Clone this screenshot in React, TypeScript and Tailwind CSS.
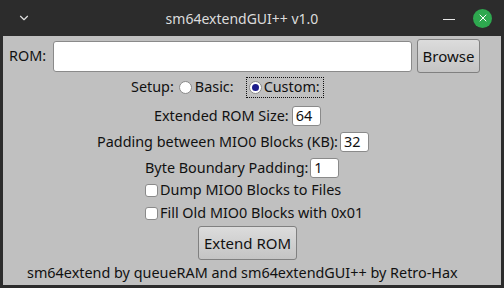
import { ChevronDown, X } from 'lucide-react'

const font = { fontFamily: '"Noto Sans", "Open Sans", sans-serif' }

function Field({ value, width }: { value: string; width: string }) {
  return (
    <div
      className={`h-[20px] ${width} bg-white border border-[#8a8a8a] rounded-[3px] px-[3px] flex items-center text-[14.4px] text-[#111] leading-none`}
    >
      {value}
    </div>
  )
}

function Radio({ checked }: { checked?: boolean }) {
  return (
    <div className="w-[13px] h-[13px] rounded-full bg-white border border-[#8a8a8a] flex items-center justify-center">
      {checked && <div className="w-[7px] h-[7px] rounded-full bg-[#1c1c8c]" />}
    </div>
  )
}

function Check() {
  return <div className="w-[13px] h-[13px] rounded-[3px] bg-white border border-[#8a8a8a]" />
}

export default function App() {
  return (
    <div className="w-[504px] h-[288px] bg-[#2c2c2c] flex flex-col" style={font}>
      {/* Title bar */}
      <div className="h-[36px] flex items-center px-[17px] relative">
        <ChevronDown className="w-[14px] h-[14px] text-[#e0e0e0]" strokeWidth={2} />
        <div className="flex-1 text-center text-[14px] text-[#dcdcdc] pl-[10px]">sm64extendGUI++ v1.0</div>
        <div className="w-[12px] h-[1px] bg-[#e8e8e8] mr-[18px] mt-[3px]" />
        <div className="w-[19px] h-[19px] rounded-full bg-[#2ea84f] flex items-center justify-center -mr-[5px]">
          <X className="w-[12px] h-[12px] text-white" strokeWidth={2} />
        </div>
      </div>

      {/* Body */}
      <div className="flex-1 mx-[3px] mb-[3px] bg-[#c0c0c0] flex flex-col text-[14.4px] text-[#111] leading-none pt-[3px]">
        {/* ROM row */}
        <div className="h-[34px] flex items-center">
          <span className="ml-[6px] w-[44px]">ROM:</span>
          <div className="h-[31px] w-[359px] bg-white border border-[#8a8a8a] rounded-[3px]" />
          <div className="ml-[5px] h-[34px] w-[63px] border border-[#808080] rounded-[3px] bg-gradient-to-b from-[#dcdcdc] to-[#c4c4c4] flex items-center justify-center text-[15px]">
            Browse
          </div>
        </div>

        {/* Setup */}
        <div className="mt-[4px] h-[21px] flex items-center ml-[128px]">
          <span className="mr-[5px]">Setup:</span>
          <Radio />
          <span className="ml-[3px]">Basic:</span>
          <div className="ml-[12px] h-[21px] border border-dotted border-[#111] flex items-center pl-[2px] pr-[3px]">
            <Radio checked />
            <span className="ml-[2px]">Custom:</span>
          </div>
        </div>

        {/* Numeric fields */}
        <div className="mt-[8px] h-[20px] flex items-center ml-[151px] gap-[3px]">
          <span>Extended ROM Size:</span>
          <Field value="64" width="w-[29px]" />
        </div>
        <div className="mt-[6px] h-[20px] flex items-center ml-[94px] gap-[2px]">
          <span>Padding between MIO0 Blocks (KB):</span>
          <Field value="32" width="w-[29px]" />
        </div>
        <div className="mt-[6px] h-[20px] flex items-center ml-[142px] gap-[2px]">
          <span>Byte Boundary Padding:</span>
          <Field value="1" width="w-[29px]" />
        </div>

        {/* Checkboxes */}
        <div className="mt-[3px] h-[18px] flex items-center ml-[142px] gap-[2px]">
          <Check />
          <span>Dump MIO0 Blocks to Files</span>
        </div>
        <div className="mt-[5px] h-[18px] flex items-center ml-[142px] gap-[2px]">
          <Check />
          <span>Fill Old MIO0 Blocks with 0x01</span>
        </div>

        {/* Extend button */}
        <div className="mt-[4px] ml-[195px] h-[34px] w-[99px] border border-[#808080] rounded-[3px] bg-gradient-to-b from-[#dcdcdc] to-[#c4c4c4] flex items-center justify-center text-[15px]">
          Extend ROM
        </div>

        <div className="mt-[5px] h-[16px] flex items-center ml-[24px]">
          sm64extend by queueRAM and sm64extendGUI++ by Retro-Hax
        </div>
      </div>
    </div>
  )
}
